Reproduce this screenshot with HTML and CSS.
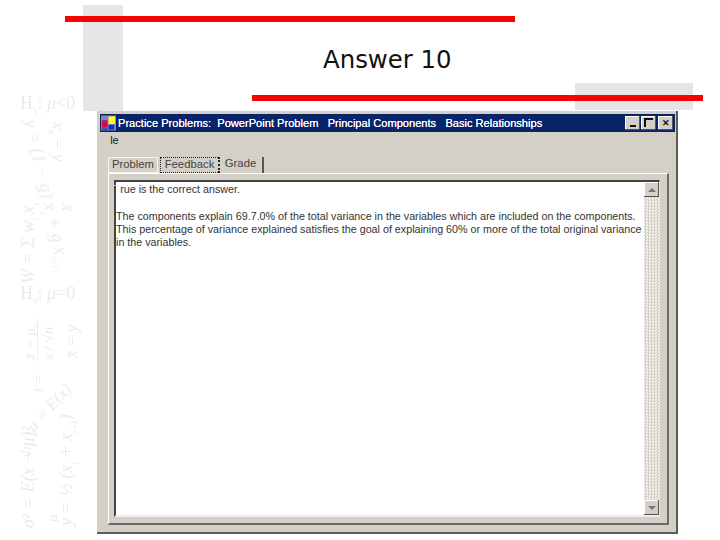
FILE: index.html
```html
<!DOCTYPE html>
<html lang="en">
<head>
<meta charset="utf-8">
<title>Answer 10</title>
<link rel="stylesheet" href="styles.css">
</head>
<body>
<div class="slide">
  <div class="deco-band"></div>
  <div class="deco-box"></div>
  <div class="rule rule-top"></div>
  <div class="rule rule-mid"></div>
  <h1 class="title">Answer 10</h1>

  <div class="math m-h1">H<sub>1</sub>: <i>μ</i>&lt;0</div>
  <div class="math m-h0">H<sub>0</sub>: <i>μ</i>=0</div>
  <div class="math m-y">y = (1 − g) x<sub>i</sub> + g x<sub>i+1</sub></div>
  <div class="math m-b">x<sub>n</sub> = y</div>
  <div class="math m-x">x̄</div>
  <div class="math m-w">W = Σ w<sub>i</sub> x<sub>i</sub></div>
  <div class="math m-num">x̄ − μ<sub>0</sub></div>
  <div class="math m-bar"></div>
  <div class="math m-den">s / √n</div>
  <div class="math m-t">t =</div>
  <div class="math m-f">x̄ = y</div>
  <div class="math m-e">μ = E(x)</div>
  <div class="math m-s">σ² = E(x − μ)²</div>
  <div class="math m-n">√n</div>
  <div class="math m-mu">μ</div>
  <div class="math m-q">y = ½ (x<sub>i</sub> + x<sub>i+1</sub>)</div>

  <section class="window">
    <header class="titlebar">
      <svg class="app-icon" viewBox="0 0 16 16" aria-hidden="true">
        <rect width="16" height="16" fill="#7f86c8"/>
        <rect x="1" y="5" width="6" height="8" fill="#c8104a"/>
        <rect x="8" y="1" width="7" height="8" fill="#ffff30"/>
        <rect x="8" y="10" width="6" height="5" fill="#1830c0"/>
        <rect x="1" y="14" width="6" height="1" fill="#101040"/>
      </svg>
      <span class="caption">Practice Problems:&nbsp; PowerPoint Problem &nbsp;&nbsp;Principal Components &nbsp;&nbsp;Basic Relationships</span>
      <div class="controls">
        <button class="ctl"><span class="ctl-min"></span></button>
        <button class="ctl"><span class="ctl-max"></span></button>
        <button class="ctl ctl-close">✕</button>
      </div>
    </header>
    <nav class="menubar"><span class="lost">Fi</span>le</nav>
    <div class="tabs">
      <div class="tab tab-plain">Problem</div>
      <div class="tab tab-active">Feedback</div>
      <div class="tab tab-last">Grade</div>
    </div>
    <div class="tabpanel">
      <div class="textbox">
        <div class="textcontent">
          <p class="verdict"><span class="lost-white">T</span>rue is the correct answer.</p>
          <p>The components explain 69.7.0% of the total variance in the variables which are included on the components. This percentage of variance explained satisfies the goal of explaining 60% or more of the total original variance in the variables.</p>
        </div>
        <div class="scrollbar">
          <div class="sb-btn"><span class="arrow-up"></span></div>
          <div class="sb-track"></div>
          <div class="sb-btn"><span class="arrow-down"></span></div>
        </div>
      </div>
    </div>
  </section>
</div>
</body>
</html>
```
FILE: styles.css
```css
* { box-sizing: border-box; }
html, body { margin: 0; padding: 0; background: #fff; }
.slide { position: relative; width: 720px; height: 540px; overflow: hidden; background: #fff; }

.deco-band { position: absolute; left: 83px; top: 5px; width: 40px; height: 106px; background: #e6e6e6; }
.deco-box { position: absolute; left: 575px; top: 83px; width: 118px; height: 27px; background: #e6e6e6; }
.rule { position: absolute; background: #fe0000; }
.rule-top { left: 65px; top: 16px; width: 450px; height: 6px; }
.rule-mid { left: 252px; top: 95px; width: 451px; height: 6px; }

.title {
  position: absolute; left: 323px; top: 44px; margin: 0;
  font: 400 24.4px/32px "DejaVu Sans", sans-serif; color: #111; white-space: nowrap;
}

.math {
  position: absolute; font-family: "Liberation Serif", serif; font-style: italic;
  color: #eaeaea; white-space: nowrap; font-size: 16px; line-height: 16px;
  transform-origin: 0 0; filter: blur(0.4px);
}
.math sub { font-size: 9px; }
.m-h1, .m-h0 { font-style: normal; font-size: 18px; line-height: 18px; left: 20px; }
.m-h1 { top: 94px; }
.m-h0 { top: 284px; }
.m-y { left: 38px; top: 118px; transform: rotate(77deg); font-size: 18px; }
.m-b { left: 66px; top: 122px; transform: rotate(90deg); font-size: 17px; }
.m-x { left: 75px; top: 204px; transform: rotate(90deg); }
.m-w { left: 20px; top: 284px; transform: rotate(-90deg); font-size: 18px; }
.m-num { left: 22px; top: 360px; transform: rotate(-90deg); font-size: 15px; }
.m-bar { left: 37px; top: 318px; width: 1px; height: 44px; background: #ececec; }
.m-den { left: 40px; top: 360px; transform: rotate(-90deg); font-size: 15px; }
.m-t { left: 30px; top: 392px; transform: rotate(-90deg); font-size: 15px; }
.m-f { left: 64px; top: 358px; transform: rotate(-90deg); font-size: 16px; }
.m-e { left: 24px; top: 424px; transform: rotate(-48deg); font-size: 17px; }
.m-s { left: 20px; top: 528px; transform: rotate(-90deg); font-size: 18px; }
.m-n { left: 18px; top: 458px; transform: rotate(-90deg); font-size: 15px; }
.m-mu { left: 44px; top: 522px; transform: rotate(-90deg); font-size: 15px; }
.m-q { left: 58px; top: 526px; transform: rotate(-90deg); font-size: 18px; }

.window {
  position: absolute; left: 97px; top: 111px; width: 581px; height: 423px;
  background: #d4d0c8; padding: 3px;
  border-right: 2px solid #5c5c58; border-bottom: 2px solid #5c5c58;
  display: flex; flex-direction: column;
  font-family: "Liberation Sans", sans-serif;
}
.titlebar { height: 18px; flex: none; margin-right: -2px; background: #0a246a; display: flex; align-items: center; color: #fff; padding: 0 1px; }
.app-icon { width: 15px; height: 16px; flex: none; }
.caption { margin-left: 2px; font-size: 11.1px; white-space: nowrap; flex: 1; text-shadow: 0 0 0.6px #fff; }
.controls { display: flex; margin-right: 1px; }
.ctl {
  width: 15px; height: 14px; padding: 0; border: 0; background: #d4d0c8; margin-left: 1px;
  box-shadow: inset -1px -1px 0 #555, inset 1px 1px 0 #fff;
  display: flex; color: #111; font: 700 9px/14px "Liberation Sans", sans-serif; justify-content: center;
}
.ctl-close { margin-left: 2px; }
.ctl-min { width: 6px; height: 2px; background: #111; margin-top: 9px; }
.ctl-max { width: 9px; height: 9px; border-top: 2px solid #111; border-left: 2px solid #111; margin-top: 2px; }
.menubar { height: 19px; flex: none; font-size: 11px; line-height: 17px; color: #222; padding-left: 1px; }
.lost { color: #d2cec6; }
.lost-white { color: #f8f8f8; }
.tabs { display: flex; height: 22px; flex: none; padding: 6px 0 0 8px; font-size: 11.3px; line-height: 13px; color: #444; }
.tab { height: 16px; text-align: center; }
.tab-plain { width: 50px; border: 1px solid #f4f4f0; }
.tab-active { width: 60px; margin-left: 2px; border: 1px dotted #222; border-right: 2px dotted #222; }
.tab-last { width: 42px; margin-left: 2px; padding-right: 3px; border-right: 2px solid #555; }
.tabpanel {
  flex: 1; margin: 0 4px 4px 8px; padding: 6px 7px 6px 5px;
  border: 1px solid #fff; border-right: 2px solid #6a6a66; border-bottom: 2px solid #6a6a66;
  display: flex; min-height: 0;
}
.textbox {
  flex: 1; display: flex; background: #fff; border-top: 2px solid #444; border-left: 2px solid #444;
  border-right: 1px solid #e8e6e0; border-bottom: 2px solid #f0eee8;
}
.textcontent { flex: 1; padding: 0 2px 0 0; font-size: 10.72px; line-height: 13px; color: #333; }
.textcontent p { margin: 0; }
.textcontent .verdict { margin: 0 0 14px -2px; padding-top: 1px; }
.scrollbar { width: 15px; flex: none; display: flex; flex-direction: column; }
.sb-btn { height: 15px; flex: none; background: #d4d0c8; box-shadow: inset -1px -1px 0 #555, inset 1px 1px 0 #fff; display: flex; align-items: center; justify-content: center; }
.sb-track { flex: 1; background-color: #f2f0ec; background-image: repeating-conic-gradient(#d4d0c8 0 25%, #f4f3ef 0 50%); background-size: 3px 3px; }
.arrow-up { width: 0; height: 0; border: 4px solid transparent; border-top: 0; border-bottom: 4px solid #777; }
.arrow-down { width: 0; height: 0; border: 4px solid transparent; border-bottom: 0; border-top: 4px solid #777; }
```
